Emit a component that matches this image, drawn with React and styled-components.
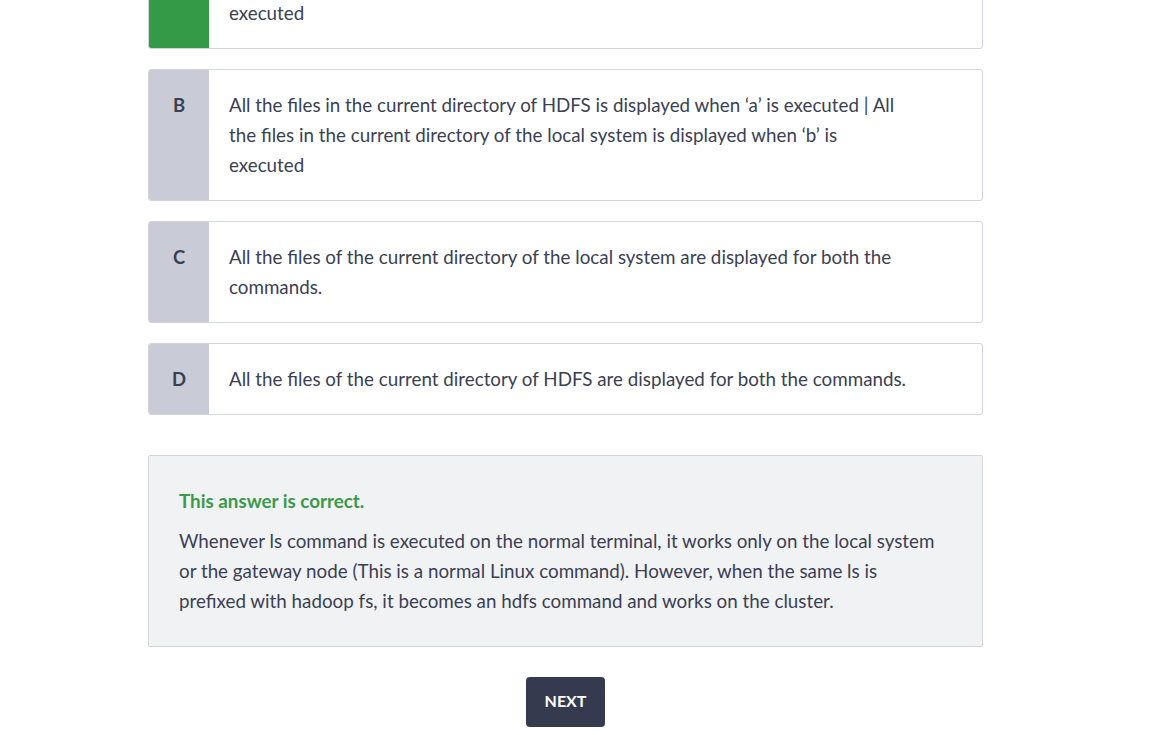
import styled, { createGlobalStyle } from 'styled-components';

const Global = createGlobalStyle`
  html, body {
    margin: 0;
    padding: 0;
    background: #ffffff;
    overflow: hidden;
  }
  body {
    font-family: Lato, "Liberation Sans", sans-serif;
    color: #3b3f54;
  }
`;

// ---------------- Page ----------------
const Page = styled.div`
  width: 835px;
  margin: -83px 0 0 148px;
  padding-bottom: 40px;
`;

const Options = styled.div`
  display: flex;
  flex-direction: column;
  gap: 20px;
`;

// ---------------- Option Card ----------------
const Option = styled.div`
  display: flex;
  background: #ffffff;
  border: 1px solid #d3d5dd;
  border-radius: 3px;
  overflow: hidden;
`;

const Letter = styled.div`
  flex: 0 0 60px;
  background: ${(p) => (p.$correct ? '#359a48' : '#c9ccd6')};
  color: #3b3f54;
  font-weight: 700;
  font-size: 18.5px;
  line-height: 30px;
  text-align: center;
  padding-top: 20px;
`;

const OptionText = styled.div`
  padding: 20px 72px 20px 20px;
  font-size: 18.8px;
  line-height: 30px;
`;

// ---------------- Explanation ----------------
const Explain = styled.div`
  margin-top: 40px;
  background: #f1f2f4;
  border: 1px solid #d3d5dd;
  border-radius: 2px;
  padding: 30px 40px 30px 30px;
`;

const ExplainTitle = styled.div`
  color: #3a9a4a;
  font-weight: 700;
  font-size: 18.8px;
  line-height: 30px;
`;

const ExplainText = styled.p`
  margin: 10px 0 0 0;
  font-size: 18.8px;
  line-height: 30px;
`;

const Actions = styled.div`
  display: flex;
  justify-content: center;
  margin-top: 30px;
`;

const NextBtn = styled.button`
  width: 79px;
  height: 50px;
  padding: 0 0 3px 0;
  border: none;
  border-radius: 4px;
  background: #363a4f;
  color: #ffffff;
  font-family: Lato, "Liberation Sans", sans-serif;
  font-weight: 700;
  font-size: 16px;
  cursor: pointer;
`;

const options = [
  {
    key: 'A',
    correct: true,
    text: 'All the files in the current directory of the local system is displayed when ‘a’ is executed | All the files in the current directory of HDFS is displayed when ‘b’ is executed',
  },
  {
    key: 'B',
    text: 'All the files in the current directory of HDFS is displayed when ‘a’ is executed | All the files in the current directory of the local system is displayed when ‘b’ is executed',
  },
  {
    key: 'C',
    text: 'All the files of the current directory of the local system are displayed for both the commands.',
  },
  {
    key: 'D',
    text: 'All the files of the current directory of HDFS are displayed for both the commands.',
  },
];

export default function App() {
  return (
    <>
      <Global />
      <Page>
        <Options>
          {options.map((o) => (
            <Option key={o.key}>
              <Letter $correct={o.correct}>{o.correct ? '' : o.key}</Letter>
              <OptionText>{o.text}</OptionText>
            </Option>
          ))}
        </Options>

        <Explain>
          <ExplainTitle>This answer is correct.</ExplainTitle>
          <ExplainText>
            Whenever ls command is executed on the normal terminal, it works only on the local system
            or the gateway node (This is a normal Linux command). However, when the same ls is
            prefixed with hadoop fs, it becomes an hdfs command and works on the cluster.
          </ExplainText>
        </Explain>

        <Actions>
          <NextBtn>NEXT</NextBtn>
        </Actions>
      </Page>
    </>
  );
}
